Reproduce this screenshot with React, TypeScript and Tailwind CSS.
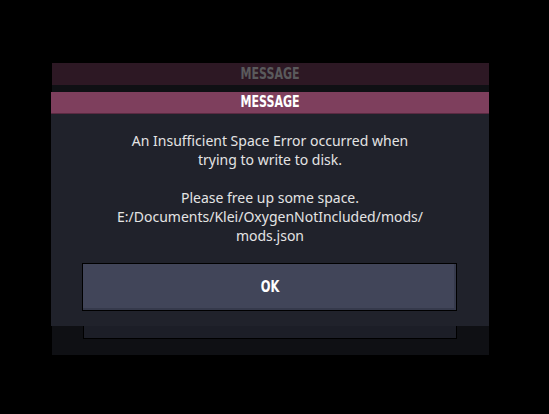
export default function App() {
  const gameFont = { fontFamily: '"DejaVu Sans Condensed", "DejaVu Sans", sans-serif' };
  return (
    <div className="w-[549px] h-[414px] bg-black pt-[63px] pl-[52px]">
      {/* Back dialog */}
      <div className="relative w-[437px] h-[292px] flex flex-col bg-[#0f1014]">
        <div
          className="h-[22px] bg-[#2d1824] flex items-center justify-center text-[#5a5a5c] font-bold text-[15px]"
          style={gameFont}
        >
          <span className="inline-block scale-x-[0.82]">MESSAGE</span>
        </div>
        <div className="flex-1 flex flex-col justify-end pb-[16px] pl-[31px] pr-[32px]">
          <div className="h-[48px] bg-[#1c1e27] border border-black" />
        </div>

        {/* Front dialog */}
        <div className="absolute top-[29px] left-[-1px] w-[438px] flex flex-col">
          <div
            className="h-[22px] bg-[#7e3f5d] border-b border-[#5a2a42] flex items-center justify-center text-white font-bold text-[15px]"
            style={gameFont}
          >
            <span className="inline-block scale-x-[0.82]">MESSAGE</span>
          </div>
          <div className="bg-[#20222b] h-[212px] pt-[17px] pb-[15px] pl-[31px] pr-[31px] flex flex-col">
            <p
              className="text-[#e4e4e4] text-[14px] leading-[19px] text-center"
              style={{ fontFamily: '"Noto Sans", sans-serif' }}
            >
              An Insufficient Space Error occurred when
              <br />
              trying to write to disk.
              <br />
              <br />
              Please free up some space.
              <br />
              E:/Documents/Klei/OxygenNotIncluded/mods/
              <br />
              mods.json
            </p>
            <button
              className="mt-auto h-[48px] w-[375px] bg-[#414559] border border-black shadow-[inset_-2px_-2px_0_#363a4c] flex items-center justify-center text-white font-bold text-[15px]"
              style={gameFont}
            >
              <span className="inline-block scale-x-[0.85]">OK</span>
            </button>
          </div>
        </div>
      </div>
    </div>
  );
}
